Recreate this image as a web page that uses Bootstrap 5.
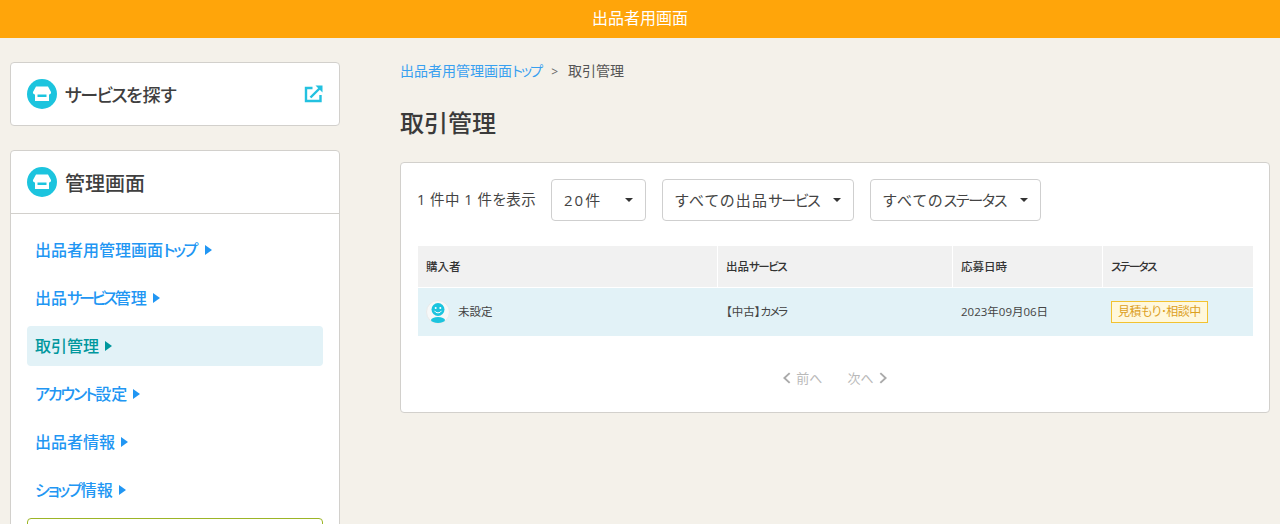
<!DOCTYPE html>
<html lang="ja">
<head>
<meta charset="utf-8">
<title>取引管理</title>
<link href="https://cdn.jsdelivr.net/npm/bootstrap@5.3.0/dist/css/bootstrap.min.css" rel="stylesheet">
<style>
html,body{height:524px;overflow:hidden}
body{background:#f4f1ea;color:#3d3d3d;font-family:"Open Sans","Noto Sans CJK JP",sans-serif;font-size:14px;font-feature-settings:"palt"}
.kn{letter-spacing:-.13em}
.kn-tight{letter-spacing:-.19em}
.kn-end{margin-right:.16em}
.topbar{height:38px;background:#ffa50a;color:#fff;font-size:16px;line-height:37px}
.shell{padding:24px 10px 0;gap:60px}
.side{width:330px;flex:none}
.main-col{flex:1;min-width:0}
.panel{background:#fff;border:1px solid #d2d0cc;border-radius:4px}
.panel-head{height:64px;padding:0 15px 0 16px}
.panel-head-tall{height:63px;border-bottom:1px solid #d2d0cc}
.panel-title{font-size:20px;font-weight:500;color:#3f3f3f;margin:4px 0 0 8px}
.panel-title-sm{font-size:18px;margin-top:4px}
.panel-title-sm .kn{letter-spacing:-.09em}
.panel-gap{margin-top:24px}
.side-nav{padding:16px 16px 0}
.side-link{display:flex;align-items:center;height:40px;margin-bottom:8px;padding-left:8px;color:#2196f3;font-size:16px;font-weight:500;text-decoration:none;border-radius:4px;gap:6px}
.side-link.now{background:#e2f2f7;color:#00979d}
.tri{width:0;height:0;border-left:7px solid currentColor;border-top:5.5px solid transparent;border-bottom:5.5px solid transparent}
.olive-box{height:80px;border:1px solid #9cb526;border-radius:4px}
.crumbs{font-size:14px;line-height:20px;margin:-1px 0 0;color:#555}
.crumb-sep{margin:0 10px;font-size:12px;color:#666}
.crumbs a{color:#38a0f0;text-decoration:none}
.page-title{font-size:24px;font-weight:500;color:#3a3a3a;margin:26px 0 24px;line-height:30px}
.list-panel{height:251px;padding:16px 16px 0}
.filters{height:42px;gap:16px}
.count-text{letter-spacing:.5px;font-size:14.5px;color:#444;width:118px;white-space:nowrap}
.pick{height:42px;border:1px solid #cfcfcf;border-radius:4px;padding:0 12px;background:#fff;color:#444;font-size:15px;letter-spacing:1.3px;display:flex;align-items:center;justify-content:space-between;white-space:nowrap}
.pick-a{letter-spacing:2px}
.pick .kn{letter-spacing:-1.2px}
.pick::after{content:"";border-top:4px solid #333;border-left:4px solid transparent;border-right:4px solid transparent;margin-left:8px}
.pick-a{width:95px}.pick-b{width:192px}.pick-c{width:171px}
.deal-table{table-layout:fixed;width:835px;margin:25px 0 0 1px;border-collapse:separate;border-spacing:0;font-size:11px}
.deal-table th{height:41px;padding:0 8px;background:#f1f1f1;font-weight:500;color:#333;border-right:1px solid #fff;font-size:11.5px}
.deal-table th:last-child{border-right:0}
.deal-table td{height:49px;padding:0 8px;background:#e2f2f7;color:#444;border:0;border-top:1px solid #fff;font-size:11.5px}
.who{display:flex;align-items:center;gap:8px}
.state-tag{display:inline-block;border:1px solid #f2c230;background:#fff8dc;color:#dca01e;font-size:12px;line-height:20px;padding:0 6px;letter-spacing:-.6px}
.pager{margin-top:30px;color:#b9b9b9;font-size:13px;gap:25px;line-height:24px}
.pager span{display:inline-flex;align-items:center;gap:5px}
</style>
</head>
<body>
<div class="topbar text-center">出品者用画面</div>
<div class="shell d-flex align-items-start">
  <aside class="side">
    <div class="panel panel-head d-flex align-items-center">
      <svg width="30" height="30" viewBox="0 0 30 30"><circle cx="15" cy="15" r="15" fill="#1cc4de"/><path d="M9 7.500h12l3 5.500a2 2 0 0 1-2.200 2.500h-13.600a2 2 0 0 1-2.200-2.500z" fill="#fff"/><path d="M8 14h14v8h-14z" fill="#fff"/><path d="M10.500 15.500h9v2.500h-9z" fill="#1cc4de"/></svg>
      <h2 class="panel-title panel-title-sm flex-grow-1"><span class="kn">サービス</span>を探す</h2>
      <svg width="20" height="20" viewBox="0 0 20 20" fill="none" stroke="#23c1e0" stroke-width="2.400"><path d="M16.500 11v6h-14.500v-13h6.500"/><path d="M6.500 13.500l10.500-10.500"/><path d="M11.500 1.500h7v7l-7-7z" fill="#23c1e0" stroke="none"/></svg>
    </div>
    <div class="panel panel-gap">
      <div class="panel-head panel-head-tall d-flex align-items-center">
        <svg width="30" height="30" viewBox="0 0 30 30"><circle cx="15" cy="15" r="15" fill="#1cc4de"/><path d="M9 7.500h12l3 5.500a2 2 0 0 1-2.200 2.500h-13.600a2 2 0 0 1-2.200-2.500z" fill="#fff"/><path d="M8 14h14v8h-14z" fill="#fff"/><path d="M10.500 15.500h9v2.500h-9z" fill="#1cc4de"/></svg>
        <h2 class="panel-title">管理画面</h2>
      </div>
      <nav class="side-nav">
        <a class="side-link" href="#"><span>出品者用管理画面<span class="kn kn-end">トップ</span></span><i class="tri"></i></a>
        <a class="side-link" href="#"><span>出品<span class="kn-tight">サービス</span>管理</span><i class="tri"></i></a>
        <a class="side-link now" href="#">取引管理<i class="tri"></i></a>
        <a class="side-link" href="#"><span><span class="kn">アカウント</span>設定</span><i class="tri"></i></a>
        <a class="side-link" href="#">出品者情報<i class="tri"></i></a>
        <a class="side-link" href="#"><span><span class="kn">ショップ</span>情報</span><i class="tri"></i></a>
        <div class="olive-box"></div>
      </nav>
    </div>
  </aside>
  <main class="main-col">
    <div class="crumbs"><a href="#">出品者用管理画面<span class="kn">トップ</span></a><span class="crumb-sep">&gt;</span>取引管理</div>
    <h1 class="page-title">取引管理</h1>
    <div class="panel list-panel">
      <div class="filters d-flex align-items-center">
        <span class="count-text">1 件中 1 件を表示</span>
        <div class="pick pick-a"><span>20件</span></div>
        <div class="pick pick-b"><span>すべての出品<span class="kn">サービス</span></span></div>
        <div class="pick pick-c"><span>すべての<span class="kn">ステータス</span></span></div>
      </div>
      <table class="deal-table">
        <colgroup><col style="width:300px"><col style="width:235px"><col style="width:150px"><col style="width:150px"></colgroup>
        <thead><tr><th>購入者</th><th>出品<span class="kn">サービス</span></th><th>応募日時</th><th><span class="kn">ステータス</span></th></tr></thead>
        <tbody><tr>
          <td><div class="who">
            <svg width="24" height="24" viewBox="0 0 24 24"><circle cx="12" cy="12" r="11.500" fill="#f6f8f8" stroke="#e8eaea"/><circle cx="12" cy="9.500" r="6.500" fill="#1cc4de"/><circle cx="9.700" cy="8" r="1" fill="#fff"/><circle cx="14.300" cy="8" r="1" fill="#fff"/><path d="M8.500 10.800a4 4 0 0 0 7 0" fill="none" stroke="#fff" stroke-width="1"/><ellipse cx="12" cy="20" rx="7" ry="3" fill="#1cc4de"/></svg>
            未設定</div></td>
          <td>【中古】<span class="kn">カメラ</span></td>
          <td>2023年09月06日</td>
          <td><span class="state-tag">見積もり･相談中</span></td>
        </tr></tbody>
      </table>
      <div class="pager d-flex justify-content-center">
        <span><svg width="8" height="14" viewBox="0 0 9 14" fill="none" stroke="#aaa" stroke-width="2.200"><path d="M7.500 1.500l-6 5.500 6 5.500"/></svg>前へ</span>
        <span>次へ<svg width="8" height="14" viewBox="0 0 9 14" fill="none" stroke="#aaa" stroke-width="2.200"><path d="M1.500 1.500l6 5.500-6 5.500"/></svg></span>
      </div>
    </div>
  </main>
</div>
<script src="https://cdn.jsdelivr.net/npm/bootstrap@5.3.0/dist/js/bootstrap.bundle.min.js"></script>
</body>
</html>
